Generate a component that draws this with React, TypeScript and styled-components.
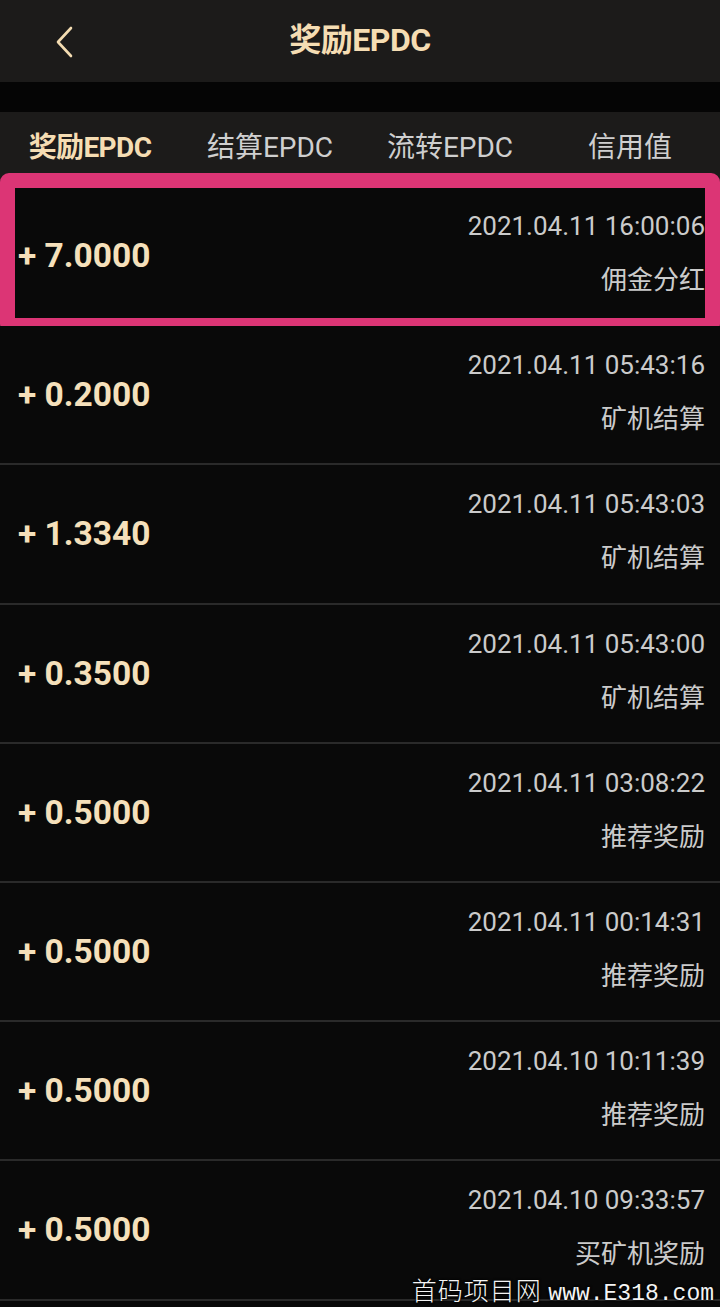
import React from 'react'
import styled, { createGlobalStyle } from 'styled-components'

type Record = {
   amount: string
   time: string
   label: string
   marked?: boolean
}

const records: Record[] = [
   { amount: '+ 7.0000', time: '2021.04.11 16:00:06', label: '佣金分红', marked: true },
   { amount: '+ 0.2000', time: '2021.04.11 05:43:16', label: '矿机结算' },
   { amount: '+ 1.3340', time: '2021.04.11 05:43:03', label: '矿机结算' },
   { amount: '+ 0.3500', time: '2021.04.11 05:43:00', label: '矿机结算' },
   { amount: '+ 0.5000', time: '2021.04.11 03:08:22', label: '推荐奖励' },
   { amount: '+ 0.5000', time: '2021.04.11 00:14:31', label: '推荐奖励' },
   { amount: '+ 0.5000', time: '2021.04.10 10:11:39', label: '推荐奖励' },
   { amount: '+ 0.5000', time: '2021.04.10 09:33:57', label: '买矿机奖励' },
]

const tabs = ['奖励EPDC', '结算EPDC', '流转EPDC', '信用值']

const GlobalStyle = createGlobalStyle`
   html, body {
      margin: 0;
      padding: 0;
      background: #090909;
   }
   * {
      box-sizing: border-box;
   }
`

const App = () => {
   return (
      <Page>
         <GlobalStyle />
         <Header>
            <BackButton>
               <svg width="20" height="32" viewBox="0 0 20 32" fill="none">
                  <path d="M16 2 L3 16 L16 30" stroke="#f3dcb1" strokeWidth="2.6" strokeLinecap="round" strokeLinejoin="round" />
               </svg>
            </BackButton>
            <Title>奖励EPDC</Title>
         </Header>
         <Gap />
         <TabBar>
            {tabs.map((t, i) => (
               <Tab key={t} active={i === 0}>{t}</Tab>
            ))}
         </TabBar>
         <List>
            {records.map((r, i) => (
               <Row key={i}>
                  <Amount>{r.amount}</Amount>
                  <Info>
                     <Time>{r.time}</Time>
                     <Label>{r.label}</Label>
                  </Info>
                  {r.marked && <Highlight />}
               </Row>
            ))}
         </List>
         <Watermark>
            首码项目网 <Site>www.E318.com</Site>
         </Watermark>
      </Page>
   )
}

const Page = styled.div`
   position: relative;
   width: 720px;
   height: 1307px;
   overflow: hidden;
   background: #090909;
   font-family: Roboto, "Noto Sans CJK SC", sans-serif;
`

const Header = styled.div`
   position: relative;
   height: 82px;
   background: #1c1b1a;
   display: flex;
   align-items: center;
   justify-content: center;
`

const BackButton = styled.div`
   position: absolute;
   left: 55px;
   top: 26px;
   width: 20px;
   height: 32px;
   display: flex;
`

const Title = styled.h1`
   margin: 0 0 8px;
   font-size: 32px;
   font-weight: 700;
   color: #f5ddb3;
   letter-spacing: -0.5px;
`

const Gap = styled.div`
   height: 30px;
   background: #050505;
`

const TabBar = styled.div`
   height: 75px;
   background: #1c1b1a;
   display: grid;
   grid-template-columns: repeat(4, 1fr);
   padding-bottom: 10px;
   align-items: center;
`

const Tab = styled.div<{ active?: boolean }>`
   text-align: center;
   font-size: 28px;
   font-weight: ${p => (p.active ? 700 : 400)};
   color: ${p => (p.active ? '#f5ddb3' : '#cfcfcf')};
   letter-spacing: ${p => (p.active ? '-0.6px' : '0')};
`

const List = styled.div`
   display: flex;
   flex-direction: column;
`

const Row = styled.div`
   position: relative;
   height: 139.2px;
   border-bottom: 2px solid #2a2a2a;
   display: flex;
   align-items: center;
   justify-content: space-between;
   padding: 0 15px 0 18px;
   background: #090909;
`

const Amount = styled.div`
   font-size: 33.5px;
   font-weight: 700;
   color: #f5e0bb;
`

const Info = styled.div`
   align-self: flex-start;
   display: flex;
   flex-direction: column;
   align-items: flex-end;
   gap: 24px;
   padding-top: 24px;
`

const Time = styled.div`
   font-size: 26px;
   line-height: 30px;
   color: #cbcbcb;
`

const Label = styled.div`
   font-size: 26px;
   line-height: 30px;
   color: #cbcbcb;
`

const Highlight = styled.div`
   position: absolute;
   top: -14px;
   bottom: -9px;
   left: 0;
   right: 0;
   border: 15px solid #dc3575;
   border-radius: 9px;
   pointer-events: none;
`

const Watermark = styled.div`
   position: absolute;
   right: 6px;
   bottom: -2px;
   line-height: 30px;
   font-family: "Noto Sans CJK SC", serif;
   font-weight: 300;
   font-size: 25px;
   color: #f4f4f4;
   text-shadow: 0 0 2px #000, 0 0 3px #000;
   letter-spacing: 1px;
   white-space: nowrap;
`

const Site = styled.span`
   font-family: "Liberation Mono", monospace;
   font-size: 23px;
   letter-spacing: 0;
`

export default App
